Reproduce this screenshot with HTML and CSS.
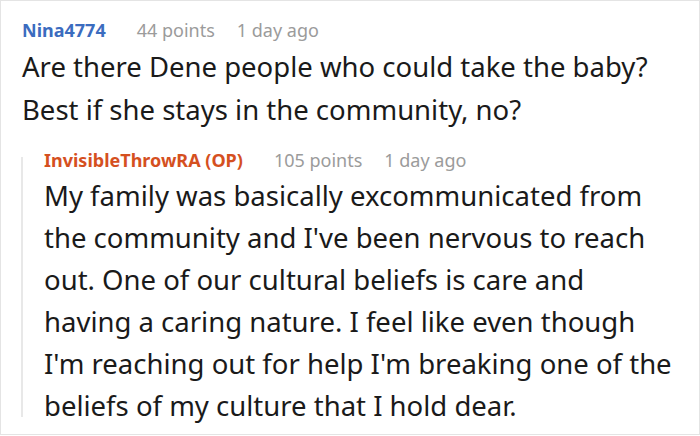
FILE: index.html
```html
<!DOCTYPE html>
<html>
<head>
<meta charset="utf-8">
<link rel="stylesheet" href="styles.css">
</head>
<body>
<div class="frame">
  <div class="comment">
    <div class="meta">
      <span class="author author-blue">Nina4774</span>
      <span class="points">44 points</span>
      <span class="time">1 day ago</span>
    </div>
    <p class="text">Are there Dene people who could take the baby?<br>Best if she stays in the community, no?</p>
    <div class="reply">
      <div class="meta">
        <span class="author author-op">InvisibleThrowRA (OP)</span>
        <span class="points">105 points</span>
        <span class="time">1 day ago</span>
      </div>
      <p class="text text-reply">My family was basically excommunicated from<br>the community and I've been nervous to reach<br>out. One of our cultural beliefs is care and<br>having a caring nature. I feel like even though<br>I'm reaching out for help I'm breaking one of the<br>beliefs of my culture that I hold dear.</p>
    </div>
  </div>
</div>
</body>
</html>
```

FILE: styles.css
```css
html, body {
  margin: 0;
  padding: 0;
  background: #ffffff;
}
.frame {
  width: 700px;
  height: 435px;
  box-sizing: border-box;
  border: 1px solid #e4e4e4;
  font-family: "Noto Sans", "Open Sans", sans-serif;
  color: #1a1a1a;
  overflow: hidden;
}
.comment {
  padding: 14px 0 0 21px;
}
.meta {
  display: flex;
  align-items: baseline;
  font-size: 18px;
  line-height: 30px;
  color: #9b9b9b;
  white-space: nowrap;
}
.author {
  font-weight: 700;
  margin-right: 31px;
}
.author-blue { color: #3b6cbf; }
.author-op { color: #d5501f; }
.points { margin-right: 22px; }
.text {
  margin: 0;
  font-size: 27.5px;
  line-height: 43px;
  white-space: nowrap;
}
.text-reply {
  line-height: 42px;
}
.reply {
  position: relative;
  margin-top: 14px;
  padding-left: 22px;
}
.reply::before {
  content: "";
  position: absolute;
  left: -1px;
  top: 12px;
  bottom: 10px;
  width: 2px;
  background: #e8e8e8;
}
```
